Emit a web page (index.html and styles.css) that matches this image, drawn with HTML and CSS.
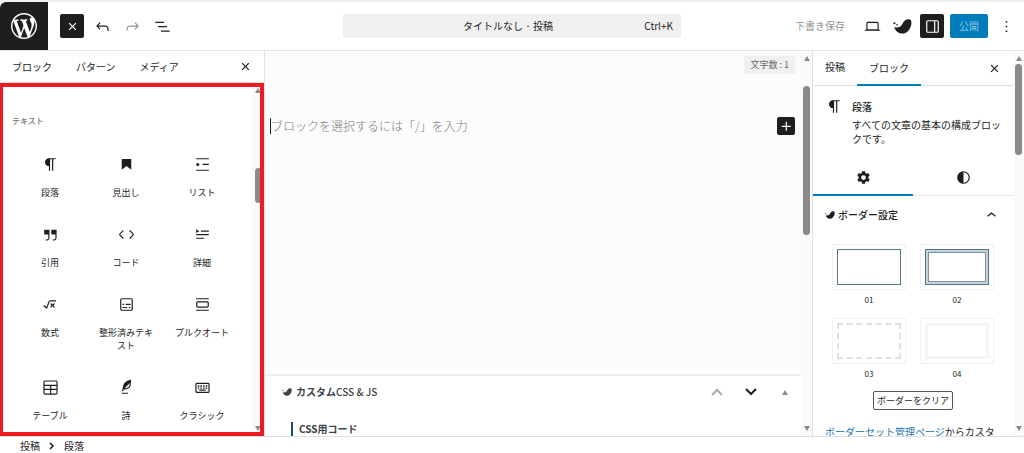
FILE: index.html
```html
<!DOCTYPE html>
<html lang="ja">
<head>
    <meta charset="UTF-8">
    <meta name="viewport" content="width=device-width, initial-scale=1.0">
    <title>タイトルなし · 投稿</title>
    <link rel="stylesheet" href="styles.css">
</head>
<body>
    <svg class="sprite" aria-hidden="true">
        <symbol id="close" viewBox="0 0 24 24"><path d="M12 13.06l3.712 3.713 1.061-1.06L13.061 12l3.712-3.712-1.06-1.06L12 10.938 8.288 7.227l-1.061 1.06L10.939 12l-3.712 3.712 1.06 1.061L12 13.061z"/></symbol>
        <symbol id="paragraph" viewBox="0 0 24 24"><path d="m9.99609 14v-.2251l.00391.0001v6.225h1.5v-14.5h2.5v14.5h1.5v-14.5h3v-1.5h-8.50391c-2.76142 0-5 2.23858-5 5 0 2.7614 2.23858 5 5 5z"/></symbol>
        <symbol id="bird" viewBox="0 0 24 24">
            <path d="M1.500 12.500c3 1.300 6 1.200 8.500-1 2-2 2.500-5 5-7 2-1.600 5-2 7-.9 1.400 1 1.600 4 .8 7C21.500 16 17 20.800 12 20.800c-5 0-9-3-10.500-8.300z"/>
            <circle cx="1.800" cy="7.800" r="1.300"/><circle cx="5" cy="9.800" r="1"/>
        </symbol>
    </svg>

    <header class="header">
        <div class="header-left">
            <a class="logo" href="#" aria-label="投稿を表示">
                <svg viewBox="0 0 20 20"><path d="M20 10c0-5.510-4.490-10-10-10C4.480 0 0 4.490 0 10c0 5.520 4.480 10 10 10 5.510 0 10-4.480 10-10zM7.780 15.370L4.370 6.220c.55-.02 1.170-.08 1.170-.08.5-.06.44-1.130-.06-1.110 0 0-1.450.11-2.370.11-.18 0-.37 0-.58-.01C4.120 2.690 6.870 1.110 10 1.110c2.330 0 4.450.87 6.050 2.340-.68-.11-1.650.39-1.650 1.580 0 .74.45 1.360.9 2.100.35.61.55 1.360.55 2.460 0 1.490-1.400 5-1.400 5l-3.030-8.370c.54-.02.82-.17.82-.17.5-.05.44-1.250-.06-1.220 0 0-1.440.12-2.380.12-.87 0-2.330-.12-2.330-.12-.5-.03-.56 1.200-.06 1.220l.92.08 1.260 3.410zM17.410 10c.24-.64.74-1.870.43-4.250.7 1.290 1.050 2.710 1.050 4.250 0 3.290-1.730 6.240-4.400 7.780.97-2.590 1.940-5.200 2.920-7.780zM6.100 18.090C3.120 16.650 1.110 13.530 1.110 10c0-1.300.23-2.480.72-3.590C3.250 10.300 4.670 14.200 6.100 18.090zm4.030-6.630l2.580 6.980c-.86.29-1.760.45-2.710.45-.79 0-1.570-.11-2.290-.33.81-2.380 1.620-4.740 2.420-7.100z"/></svg>
            </a>
            <div class="tools">
                <button class="tool dark" aria-label="ブロックインサーター"><svg class="icon"><use href="#close"/></svg></button>
                <button class="tool" aria-label="元に戻す"><svg class="icon" viewBox="0 0 24 24"><path d="M18.300 11.700c-.6-.6-1.400-.9-2.300-.9H6.700l2.900-3.300-1.100-1-4.500 5L8.500 16l1-1-2.700-2.700H16c.5 0 .9.2 1.300.5 1 1 1 3.400 1 4.500v.3h1.500v-.2c0-1.500 0-4.300-1.500-5.700z"/></svg></button>
                <button class="tool faded" aria-label="やり直す"><svg class="icon" viewBox="0 0 24 24"><path d="M15.600 6.500l-1.100 1 2.900 3.300H8c-.9 0-1.700.3-2.300.9-1.400 1.500-1.400 4.200-1.400 5.600v.2h1.500v-.3c0-1.100 0-3.500 1-4.500.3-.3.7-.5 1.300-.5h9.200L14.500 15l1.100 1.100 4.600-4.600-4.600-5z"/></svg></button>
                <button class="tool" aria-label="リスト表示"><svg class="icon" viewBox="0 0 24 24"><path d="M3 6h11v1.500H3V6Zm3.500 5.500h11V13h-11v-1.500ZM21 17H10v1.500h11V17Z"/></svg></button>
            </div>
        </div>
        <button class="title-bar"><span class="title-text">タイトルなし · 投稿</span><span class="shortcut">Ctrl+K</span></button>
        <div class="header-right">
            <button class="draft">下書き保存</button>
            <button class="tool" aria-label="表示"><svg class="icon" viewBox="0 0 24 24"><path d="M20.500 16h-.7V8c0-1.100-.9-2-2-2H6.200c-1.100 0-2 .9-2 2v8h-.7c-.8 0-1.500.7-1.500 1.500h20c0-.8-.7-1.500-1.500-1.500zM5.700 8c0-.3.2-.5.5-.5h11.600c.3 0 .5.2.5.5v7.600H5.700V8z"/></svg></button>
            <button class="tool" aria-label="SWELL"><svg class="icon"><use href="#bird"/></svg></button>
            <button class="tool dark" aria-label="設定"><svg class="icon" viewBox="0 0 24 24"><path d="M18 4H6c-1.100 0-2 .9-2 2v12c0 1.100.9 2 2 2h12c1.100 0 2-.9 2-2V6c0-1.100-.9-2-2-2zm-4 14.500H6c-.3 0-.5-.2-.5-.5V6c0-.3.2-.5.5-.5h8v13zm4.500-.5c0 .3-.2.5-.5.5h-2.500v-13H18c.3 0 .5.2.5.5v12z"/></svg></button>
            <button class="publish">公開</button>
            <button class="tool" aria-label="オプション"><svg class="icon" viewBox="0 0 24 24"><path d="M13 19h-2v-2h2v2zm0-6h-2v-2h2v2zm0-6h-2V5h2v2z"/></svg></button>
        </div>
    </header>

    <main class="main">
        <section class="inserter">
            <div class="tabs">
                <button class="tab">ブロック</button>
                <button class="tab">パターン</button>
                <button class="tab">メディア</button>
                <button class="tool tab-close" aria-label="閉じる"><svg class="icon"><use href="#close"/></svg></button>
            </div>
            <div class="inserter-body">
                <div class="block-list">
                    <h2 class="category">テキスト</h2>
                    <div class="blocks">
                        <button class="block"><svg class="icon"><use href="#paragraph"/></svg><span>段落</span></button>
                        <button class="block"><svg class="icon" viewBox="0 0 24 24"><path d="M6 5V18.591L12 13.847L18 18.591V5H6Z"/></svg><span>見出し</span></button>
                        <button class="block"><svg class="icon" viewBox="0 0 24 24"><path d="M4 4v1.500h16V4H4zm8 8.500h8V11h-8v1.500zM4 20h16v-1.500H4V20zm4-8c0-1.100-.9-2-2-2s-2 .9-2 2 .9 2 2 2 2-.9 2-2z"/></svg><span>リスト</span></button>
                        <button class="block"><svg class="icon" viewBox="0 0 24 24"><path d="M13 6v6h5.200v4c0 .8-.2 1.400-.5 1.700-.6.6-1.600.6-2.500.5h-.3v1.500h.5c1 0 2.300-.1 3.300-1 .6-.6 1-1.600 1-2.800V6H13zm-9 6h5.200v4c0 .8-.2 1.400-.5 1.700-.6.6-1.600.6-2.500.5h-.3v1.500h.5c1 0 2.300-.1 3.300-1 .6-.6 1-1.600 1-2.800V6H4v6z"/></svg><span>引用</span></button>
                        <button class="block"><svg class="icon" viewBox="0 0 24 24"><path d="M20.800 10.700l-4.300-4.300-1.100 1.100 4.300 4.300c.1.1.1.3 0 .4l-4.300 4.300 1.100 1.100 4.300-4.300c.7-.8.7-1.900 0-2.600zM4.200 11.800l4.300-4.300-1-1-4.300 4.300c-.7.7-.7 1.800 0 2.500l4.300 4.300 1.100-1.100-4.300-4.300c-.2-.1-.2-.3-.1-.4z"/></svg><span>コード</span></button>
                        <button class="block"><svg class="icon" viewBox="0 0 24 24"><path d="M4 16h10v1.500H4V16Zm0-4.500h16V13H4v-1.500ZM10 7h10v1.500H10V7Z"/><path d="m4 5.250 4 2.500-4 2.500v-5Z"/></svg><span>詳細</span></button>
                        <button class="block"><svg class="icon" viewBox="0 0 24 24"><path d="M11.200 6.800c-.7 0-1.400.5-1.600 1.100l-2.800 7.500-1.200-1.800c-.1-.2-.4-.3-.6-.3H3v1.500h1.600l1.200 1.800c.6.9 1.900.7 2.200-.3l2.900-7.900s.1-.2.2-.2h7.800V6.700h-7.800Zm5.300 3.400-1.900 1.900-1.900-1.900-1.100 1.100 1.900 1.900-1.900 1.900 1.100 1.100 1.900-1.900 1.900 1.900 1.100-1.100-1.900-1.900 1.900-1.900-1.100-1.100Z"/></svg><span>数式</span></button>
                        <button class="block"><svg class="icon" viewBox="0 0 24 24"><path d="M18 4H6c-1.100 0-2 .9-2 2v12c0 1.100.9 2 2 2h12c1.100 0 2-.9 2-2V6c0-1.100-.9-2-2-2zm.5 14c0 .3-.2.5-.5.5H6c-.3 0-.5-.2-.5-.5V6c0-.3.2-.5.5-.5h12c.3 0 .5.2.5.5v12zM7 16.500h6V15H7v1.500zm4-4h6V11h-6v1.500zM9 11H7v1.500h2V11zm6 5.500h2V15h-2v1.500z"/></svg><span>整形済みテキスト</span></button>
                        <button class="block"><svg class="icon" viewBox="0 0 24 24"><path d="M18 8H6c-1.100 0-2 .9-2 2v4c0 1.100.9 2 2 2h12c1.100 0 2-.9 2-2v-4c0-1.100-.9-2-2-2zm.5 6c0 .3-.2.5-.5.5H6c-.3 0-.5-.2-.5-.5v-4c0-.3.2-.5.5-.5h12c.3 0 .5.2.5.5v4zM4 4v1.500h16V4H4zm0 16h16v-1.500H4V20z"/></svg><span>プルクオート</span></button>
                        <button class="block"><svg class="icon" viewBox="0 0 24 24"><path d="M19 3H5c-1.100 0-2 .9-2 2v14c0 1.100.9 2 2 2h14c1.100 0 2-.9 2-2V5c0-1.100-.9-2-2-2zM5 4.500h14c.3 0 .5.2.5.5v3.500h-15V5c0-.3.2-.5.5-.5zm8 5.500h6.500v3.500H13V10zm-1.500 3.500h-7V10h7v3.500zm-7 5.500v-4h7v4.500H5c-.3 0-.5-.2-.5-.5zm14.500.5h-6V15h6.500v4c0 .3-.2.5-.5.5z"/></svg><span>テーブル</span></button>
                        <button class="block"><svg class="icon" viewBox="0 0 24 24"><path d="M17.800 2l-.9.3c-.1 0-3.600 1-5.200 2.100C10 5.500 9.300 6.500 8.900 7.100c-.6.9-1.700 4.700-1.700 6.300l-.9 2.300c-.2.4 0 .8.4 1 .1 0 .2.1.3.1.3 0 .6-.2.7-.5l.6-1.500c.3 0 .7-.1 1.200-.2.7-.1 1.400-.3 2.200-.5.8-.2 1.600-.5 2.400-.8.7-.3 1.400-.7 1.900-1.200s.8-1.200 1-1.900c.2-.7.3-1.600.4-2.400.1-.8.1-1.700.2-2.500 0-.8.1-1.500.2-2.100V2zm-1.900 5.600c-.1.8-.2 1.500-.3 2.100-.2.6-.4 1-.6 1.300-.3.3-.8.6-1.400.9-.7.3-1.400.5-2.200.8-.6.2-1.300.3-1.800.4L15 7.500c.3-.3.6-.7 1-1.100 0 .4 0 .8-.1 1.200zM6 20h8v-1.500H6V20z"/></svg><span>詩</span></button>
                        <button class="block"><svg class="icon" viewBox="0 0 24 24"><path fill-rule="evenodd" d="M19 6H5c-1.100 0-2 .9-2 2v9c0 1.100.9 2 2 2h14c1.100 0 2-.9 2-2V8c0-1.100-.9-2-2-2zm.5 11c0 .3-.2.5-.5.5H5c-.3 0-.5-.2-.5-.5V8c0-.3.2-.5.5-.5h14c.3 0 .5.2.5.5v9z"/><path d="M6 9h2v2H6zM9.300 9h2v2h-2zM12.700 9h2v2h-2zM16 9h2v2h-2zM6 12h2v1.500H6zM9.300 12h2v1.500h-2zM12.700 12h2v1.500h-2zM16 12h2v1.500h-2zM8 14.600h8V16H8z"/></svg><span>クラシック</span></button>
                    </div>
                </div>
                <div class="scrollbar inserter-scroll"><i class="arrow up"></i><i class="thumb"></i><i class="arrow down"></i></div>
            </div>
        </section>

        <section class="editor">
            <div class="editor-content">
                <div class="canvas">
                    <span class="count">文字数 : 1</span>
                    <div class="empty-block">
                        <input class="placeholder" type="text" aria-label="空のブロック" placeholder="ブロックを選択するには「/」を入力">
                        <button class="add" aria-label="ブロックを追加"><svg class="icon" viewBox="0 0 24 24"><path d="M11 12.500V17.500H12.500V12.500H17.500V11H12.500V6H11V11H6V12.500H11Z"/></svg></button>
                    </div>
                </div>
                <div class="metabox">
                    <div class="metabox-head">
                        <h2 class="metabox-title"><svg class="bird-small"><use href="#bird"/></svg><span><b>カスタム</b>CSS &amp; JS</span></h2>
                        <div class="metabox-actions">
                            <button class="move disabled" aria-label="上に移動"><svg viewBox="0 0 12 12"><path d="M1 9l5-5 5 5"/></svg></button>
                            <button class="move" aria-label="下に移動"><svg viewBox="0 0 12 12"><path d="M1 3l5 5 5-5"/></svg></button>
                            <button class="move" aria-label="パネルを切り替え"><i class="arrow up"></i></button>
                        </div>
                    </div>
                    <h3 class="code-label">CSS用コード</h3>
                </div>
            </div>
            <div class="scrollbar editor-scroll"><i class="arrow up"></i><i class="thumb"></i><i class="arrow down"></i></div>
        </section>

        <aside class="sidebar">
            <div class="sidebar-content">
                <div class="tabs">
                    <button class="tab">投稿</button>
                    <button class="tab active">ブロック</button>
                    <button class="tool tab-close" aria-label="閉じる"><svg class="icon"><use href="#close"/></svg></button>
                </div>
                <div class="card">
                    <svg class="icon"><use href="#paragraph"/></svg>
                    <div>
                        <h2 class="card-title">段落</h2>
                        <p class="card-text">すべての文章の基本の構成ブロックです。</p>
                    </div>
                </div>
                <div class="icon-tabs">
                    <button class="icon-tab active" aria-label="設定"><svg class="icon" viewBox="0 0 24 24"><path fill-rule="evenodd" d="M10.200 4h3.600l.5 2.300 1.500.9 2.200-.8 1.800 3.100-1.700 1.500v2l1.700 1.500-1.800 3.100-2.200-.8-1.500.9-.5 2.300h-3.600l-.5-2.300-1.500-.9-2.200.8-1.800-3.100L5.900 13v-2L4.200 9.500 6 6.400l2.200.8 1.500-.9zM12 9a3 3 0 1 0 0 6 3 3 0 0 0 0-6z"/></svg></button>
                    <button class="icon-tab" aria-label="スタイル"><svg class="icon" viewBox="0 0 24 24"><path fill-rule="evenodd" d="M20 12a8 8 0 1 1-16 0 8 8 0 0 1 16 0Zm-1.500 0a6.500 6.500 0 0 1-6.500 6.500v-13a6.500 6.500 0 0 1 6.500 6.500Z"/></svg></button>
                </div>
                <button class="panel-title"><svg class="bird-small"><use href="#bird"/></svg><span>ボーダー設定</span><svg class="icon chevron" viewBox="0 0 24 24"><path d="M6.500 12.400L12 8l5.500 4.400-.9 1.200L12 10l-4.500 3.600-1-1.200z"/></svg></button>
                <div class="borders">
                    <button class="border-option"><span class="swatch"><span class="sample solid"></span></span>01</button>
                    <button class="border-option"><span class="swatch"><span class="sample double"></span></span>02</button>
                    <button class="border-option"><span class="swatch"><span class="sample dashed"></span></span>03</button>
                    <button class="border-option"><span class="swatch"><span class="sample pale"></span></span>04</button>
                </div>
                <button class="clear">ボーダーをクリア</button>
                <p class="note"><a href="#">ボーダーセット管理ページ</a>からカスタ</p>
            </div>
            <div class="scrollbar sidebar-scroll"><i class="arrow up"></i><i class="thumb"></i><i class="arrow down"></i></div>
        </aside>
    </main>

    <footer class="footer">
        <a href="#">投稿</a>
        <svg viewBox="0 0 8 8"><path d="M2 1l3 3-3 3"/></svg>
        <span>段落</span>
    </footer>
</body>
</html>
```
FILE: styles.css
```css
* {
    box-sizing: border-box;
}
body {
    margin: 0;
    height: 100vh;
    display: flex;
    flex-direction: column;
    overflow: hidden;
    border-top: 2px solid #f0f0f0;
    background: #fff;
    color: #1e1e1e;
    font: 10px/14px "Noto Sans CJK JP", sans-serif;
}
h2, h3, p {
    margin: 0;
    font-size: 10px;
}
button {
    padding: 0;
    border: 0;
    background: none;
    color: inherit;
    font: inherit;
    cursor: pointer;
}
a {
    color: inherit;
    text-decoration: none;
}
.sprite {
    display: none;
}
.icon {
    width: 19px;
    height: 19px;
    flex: none;
    fill: currentColor;
}

/* header */
.header {
    display: grid;
    grid-template-columns: 1fr 33% 1fr;
    align-items: center;
    height: 49px;
    flex: none;
    border-bottom: 1px solid #e6e6e6;
}
.header-left, .header-right, .tools {
    display: flex;
    align-items: center;
}
.logo {
    display: flex;
    align-items: center;
    justify-content: center;
    width: 48px;
    height: 48px;
    border-top-left-radius: 6px;
    background: #1e1e1e;
}
.logo svg {
    width: 26px;
    height: 26px;
    fill: #fff;
}
.tools {
    gap: 6px;
    padding-left: 12px;
}
.tool {
    display: flex;
    align-items: center;
    justify-content: center;
    width: 24px;
    height: 24px;
    border-radius: 2px;
}
.tool.dark {
    background: #1e1e1e;
    color: #fff;
}
.tool.faded {
    color: #949494;
}
.title-bar {
    display: grid;
    grid-template-columns: 1fr auto 1fr;
    align-items: center;
    height: 24px;
    padding: 0 8px 0 0;
    border-radius: 3px;
    background: #f0f0f0;
}
.title-text {
    grid-column: 2;
}
.shortcut {
    text-align: right;
}
.header-right {
    justify-content: flex-end;
    gap: 6px;
    padding-right: 6px;
}
.draft {
    margin-right: 9px;
    color: #949494;
}
.publish {
    width: 38px;
    height: 24px;
    border-radius: 2px;
    background: #007cba;
    color: #8cc4e0;
}

/* columns */
.main {
    display: grid;
    grid-template-columns: 265px 1fr 212px;
    flex: 1;
    min-height: 0;
}
.tabs {
    display: flex;
    align-items: center;
    border-bottom: 1px solid #e0e0e0;
}
.tab {
    align-self: stretch;
    padding: 0 12px;
    border-bottom: 2px solid transparent;
}
.tab.active {
    margin-bottom: -1px;
    border-color: #007cba;
}
.tab-close {
    margin-left: auto;
}

/* scrollbars */
.scrollbar {
    display: flex;
    flex-direction: column;
    align-items: center;
    width: 11px;
    padding: 5px 0;
    background: #fafafa;
}
.arrow {
    border: 3px solid transparent;
}
.arrow.up {
    border-top: 0;
    border-bottom: 5px solid #8a8a8a;
}
.arrow.down {
    margin-top: auto;
    border-bottom: 0;
    border-top: 5px solid #8a8a8a;
}
.thumb {
    width: 7px;
    border-radius: 4px;
    background: #8a8a8a;
}

/* inserter */
.inserter {
    display: flex;
    flex-direction: column;
    min-height: 0;
    border-right: 1px solid #e0e0e0;
}
.inserter .tabs {
    height: 32px;
    padding-right: 7px;
}
.inserter .tab {
    padding-top: 3px;
}
.inserter-body {
    position: relative;
    display: flex;
    flex: 1;
    min-height: 0;
}
/* red frame around the block list */
.inserter-body::after {
    content: "";
    position: absolute;
    inset: 0 0 0 -1px;
    border: 4px solid #ed1c24;
    pointer-events: none;
}
.block-list {
    flex: 1;
    overflow: hidden;
    padding: 30px 12px 0;
}
.category {
    margin-bottom: 13px;
    color: #757575;
    font-size: 8px;
    font-weight: 500;
    line-height: 16px;
}
.blocks {
    display: grid;
    grid-template-columns: repeat(3, 1fr);
}
.block {
    display: flex;
    flex-direction: column;
    align-items: center;
    gap: 12px;
    padding: 13px 8px;
    font-size: 9px;
    line-height: 13px;
}
.inserter-scroll {
    width: 12px;
}
.inserter-scroll .thumb {
    height: 35px;
    margin-top: 75px;
}

/* editor */
.editor {
    display: flex;
    min-width: 0;
    min-height: 0;
    background: #fcfcfc;
}
.editor-content {
    display: flex;
    flex-direction: column;
    flex: 1;
    min-width: 0;
}
.canvas {
    display: flex;
    flex-direction: column;
    flex: 1;
    padding: 5px 6px 5px 5px;
}
.count {
    align-self: flex-end;
    padding: 2px 6px;
    background: #f0f0f0;
    color: #666;
    font-size: 9px;
}
.empty-block {
    display: flex;
    align-items: center;
    justify-content: space-between;
    margin-top: 43px;
}
.placeholder {
    flex: 1;
    min-width: 0;
    height: 16px;
    padding: 0;
    border: 0;
    border-left: 1px solid #1e1e1e;
    outline: 0;
    background: none;
    font: 300 12px/16px "Noto Sans CJK JP", sans-serif;
}
.placeholder::placeholder {
    color: #808080;
    opacity: 1;
}
.add {
    display: flex;
    width: 18px;
    height: 18px;
    align-items: center;
    justify-content: center;
    border-radius: 2px;
    background: #1e1e1e;
    color: #fff;
}
.metabox {
    height: 62px;
    overflow: hidden;
    border-top: 2px solid #eee;
    background: #fff;
    color: #3c434a;
}
.metabox-head {
    display: flex;
    align-items: center;
    justify-content: space-between;
    height: 32px;
    padding: 0 7px 0 17px;
}
.metabox-title {
    display: flex;
    align-items: center;
    gap: 4px;
    font-weight: 500;
}
.bird-small {
    width: 10px;
    height: 10px;
    flex: none;
    fill: currentColor;
}
.metabox-actions {
    display: flex;
    gap: 16px;
}
.move {
    display: flex;
    align-items: center;
    justify-content: center;
    width: 18px;
}
.move svg {
    width: 12px;
    height: 12px;
    fill: none;
    stroke: #1e1e1e;
    stroke-width: 2;
}
.move.disabled svg {
    stroke: #a7aaad;
}
.code-label {
    margin: 14px 0 0 26px;
    padding-left: 6px;
    border-left: 2px solid #1b4f66;
}
.editor-scroll .thumb {
    height: 149px;
    margin-top: 25px;
}

/* settings sidebar */
.sidebar {
    display: flex;
    min-height: 0;
    border-left: 1px solid #e0e0e0;
}
.sidebar-content {
    flex: 1;
    min-width: 0;
    overflow: hidden;
}
.sidebar .tabs {
    height: 35px;
    padding-right: 7px;
}
.card {
    display: flex;
    gap: 8px;
    padding: 11px 8px 0 12px;
}
.card-title {
    margin: 3px 0 4px;
    font-weight: 500;
}
.card-text {
    line-height: 14px;
}
.icon-tabs {
    display: grid;
    grid-template-columns: 1fr 1fr;
    height: 35px;
    margin-top: 15px;
    border-bottom: 1px solid #e6e6e6;
}
.icon-tab {
    display: flex;
    align-items: center;
    justify-content: center;
    border-bottom: 2px solid transparent;
}
.icon-tab.active {
    margin-bottom: -1px;
    border-color: #007cba;
}
.panel-title {
    display: flex;
    align-items: center;
    gap: 3px;
    width: 100%;
    height: 38px;
    padding: 0 12px;
    font-weight: 500;
}
.chevron {
    margin-left: auto;
}
.borders {
    display: grid;
    grid-template-columns: 74px 74px;
    justify-content: center;
    gap: 10px 14px;
    padding-top: 10px;
}
.border-option {
    display: flex;
    flex-direction: column;
    align-items: center;
    gap: 2px;
    font-size: 8px;
    line-height: 16px;
}
.swatch {
    display: flex;
    width: 74px;
    height: 46px;
    padding: 4px;
    border: 1px solid #f0f0f0;
    border-radius: 2px;
}
.sample {
    flex: 1;
    border: 1px solid #557683;
}
.sample.double {
    outline: 1px solid #7b959f;
    outline-offset: -4px;
    box-shadow: inset 0 0 0 2px #c5d2d7;
}
.sample.dashed {
    border: 2px dashed #e0e0e0;
}
.sample.pale {
    border: 3px solid #f5f5f5;
}
.clear {
    display: block;
    height: 19px;
    margin: 9px auto 0;
    padding: 0 3px;
    border: 1px solid #50575e;
    border-radius: 2px;
    font-size: 9px;
}
.note {
    margin: 15px 0 0 12px;
    white-space: nowrap;
}
.note a {
    color: #2271b1;
}
.sidebar-scroll .thumb {
    height: 91px;
    margin-top: 3px;
}

/* breadcrumb */
.footer {
    display: flex;
    align-items: center;
    gap: 8px;
    height: 17px;
    flex: none;
    padding: 2px 20px 0;
    border-top: 1px solid #e0e0e0;
}
.footer svg {
    width: 8px;
    height: 8px;
    fill: none;
    stroke: #1e1e1e;
    stroke-width: 1.5;
}
```
